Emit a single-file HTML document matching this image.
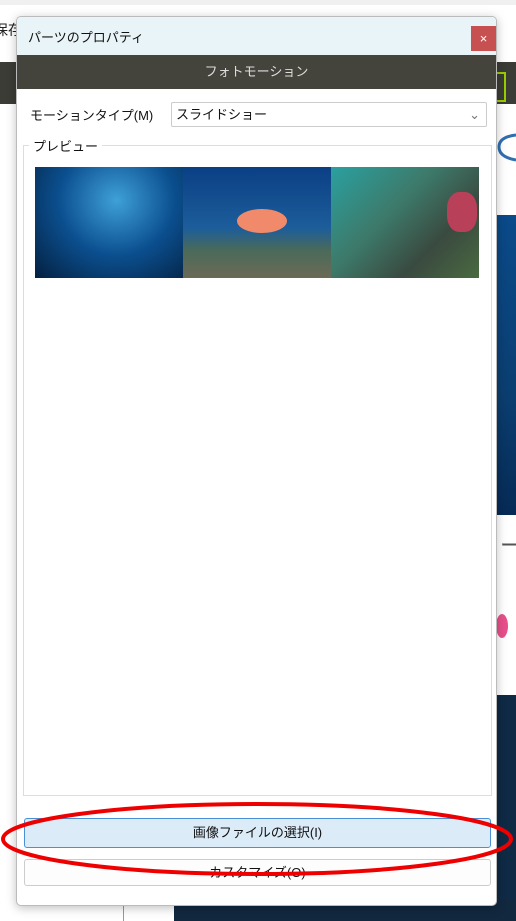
<!DOCTYPE html>
<html><head><meta charset="utf-8"><style>
body{margin:0;width:516px;height:921px;position:relative;overflow:hidden;background:#fff;font-family:"Liberation Sans","Noto Sans CJK JP",sans-serif;}
.a{position:absolute;}
</style></head><body>
<div class="a" style="left:0;top:0;width:516px;height:5px;background:#f0f0f0"></div>
<div class="a" style="left:-6px;top:20px;font-size:14px;color:#222">保存</div>
<div class="a" style="left:0;top:62px;width:516px;height:42px;background:#3c3c36"></div>
<div class="a" style="left:492px;top:72px;width:10px;height:26px;border:2px solid #9acd00"></div>
<svg class="a" style="left:497px;top:125px" width="19" height="70"><path d="M19 10 Q2 12 2 22 Q2 32 19 35" fill="none" stroke="#2f6fb0" stroke-width="3"/></svg>
<div class="a" style="left:497px;top:215px;width:19px;height:300px;background:linear-gradient(#0a4a8a,#0b3e70 60%,#062a55)"></div>
<div class="a" style="left:500px;top:528px;font-size:22px;color:#555">ー</div>
<div class="a" style="left:496px;top:614px;width:12px;height:24px;border-radius:50%;background:#e8508a"></div>
<div class="a" style="left:497px;top:695px;width:19px;height:226px;background:#0f2a45"></div>
<div class="a" style="left:174px;top:900px;width:342px;height:21px;background:#11283f"></div>
<div class="a" style="left:123px;top:900px;width:1px;height:21px;background:#999"></div>
<div class="a" style="left:16px;top:16px;width:479px;height:888px;background:#fff;border:1px solid #bbb;border-radius:5px;box-shadow:0 2px 10px rgba(0,0,0,.25);overflow:hidden">
 <div class="a" style="left:0;top:0;width:479px;height:38px;background:#e8f4f8"></div>
 <div class="a" style="left:11px;top:10px;font-size:13px;color:#111">パーツのプロパティ</div>
 <div class="a" style="left:454px;top:9px;width:25px;height:25px;background:#c75050;color:#fff;font-size:13px;text-align:center;line-height:25px">×</div>
 <div class="a" style="left:0;top:38px;width:479px;height:34px;background:#45443c;color:#ddd;font-size:13px;text-align:center;line-height:34px">フォトモーション</div>
 <div class="a" style="left:13px;top:88px;font-size:13px;color:#111">モーションタイプ(M)</div>
 <div class="a" style="left:154px;top:85px;width:310px;height:23px;border:1px solid #ccc;border-radius:2px;font-size:13px;line-height:23px;padding-left:4px;color:#111">スライドショー<span style="position:absolute;right:6px;top:0;color:#777">&#8964;</span></div>
 <div class="a" style="left:6px;top:128px;width:467px;height:649px;border:1px solid #ddd"></div>
 <div class="a" style="left:12px;top:119px;background:#fff;padding:0 4px;font-size:13px;color:#111">プレビュー</div>
 <div class="a" style="left:18px;top:150px;width:148px;height:111px;background:radial-gradient(ellipse at 55% 30%,#3fa0d8,#0b4f8f 50%,#04203f)"></div>
 <div class="a" style="left:166px;top:150px;width:148px;height:111px;background:linear-gradient(#0b3f85,#1c5d9a 55%,#4a6a5a 75%,#6b6a55)"></div>
 <div class="a" style="left:220px;top:192px;width:50px;height:24px;border-radius:50%;background:#f08a6a"></div>
 <div class="a" style="left:314px;top:150px;width:148px;height:111px;background:linear-gradient(135deg,#2aa0a0,#3d7a6a 40%,#3a4a40 70%,#4a6a40)"></div>
 <div class="a" style="left:430px;top:175px;width:30px;height:40px;border-radius:40%;background:#b84058"></div>
 <div class="a" style="left:7px;top:801px;width:465px;height:28px;background:#dcebf8;border:1px solid #4a90d6;border-radius:3px;font-size:13px;line-height:28px;text-align:center;color:#111">画像ファイルの選択(I)</div>
 <div class="a" style="left:7px;top:842px;width:465px;height:25px;background:#fdfdfd;border:1px solid #ccc;border-radius:3px;font-size:13px;line-height:25px;text-align:center;color:#111">カスタマイズ(O)</div>
</div>
<svg class="a" style="left:0;top:0" width="516" height="921"><ellipse cx="257" cy="839" rx="254" ry="35" fill="none" stroke="#e00" stroke-width="4"/></svg>
</body></html>
